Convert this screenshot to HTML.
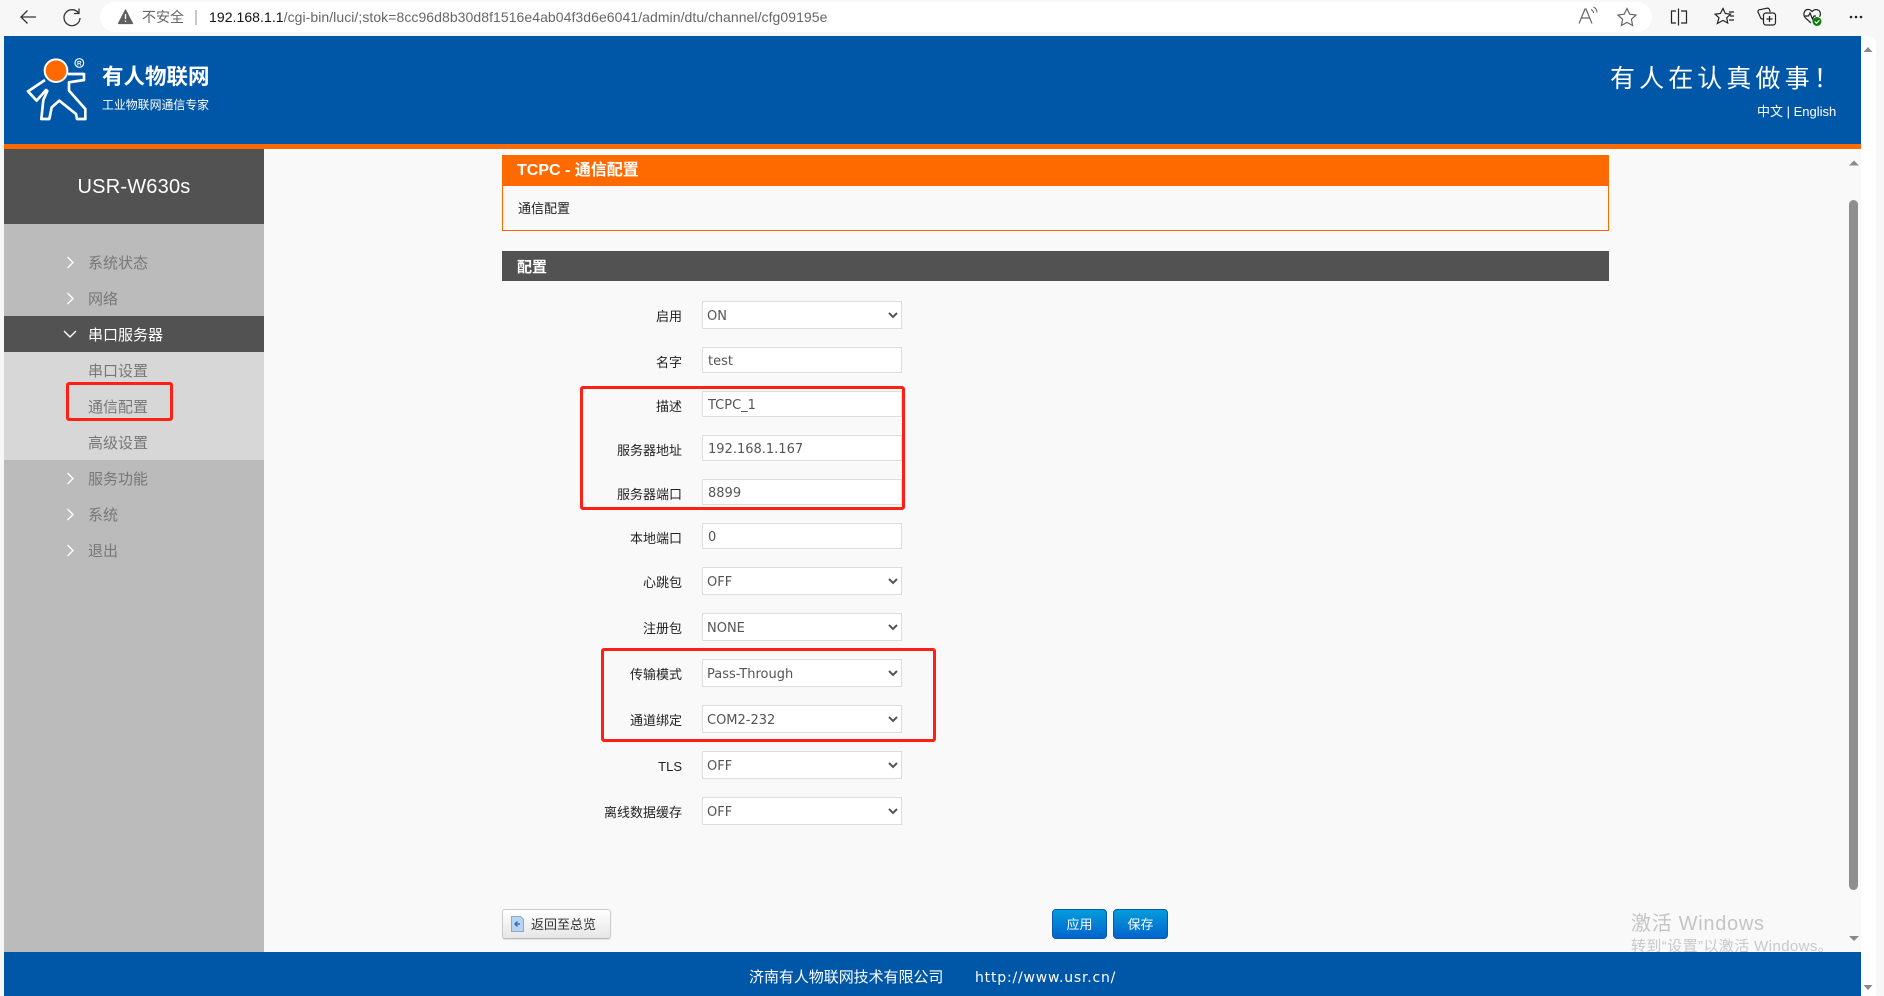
<!DOCTYPE html>
<html lang="zh"><head><meta charset="utf-8"><title>TCPC - 通信配置</title>
<style>
*{box-sizing:border-box}
html,body{margin:0;padding:0;width:1884px;height:996px;overflow:hidden;background:#f7f7f7;font-family:"Liberation Sans","Noto Sans CJK SC",sans-serif}
.a{position:absolute;white-space:nowrap}
.t{position:absolute;white-space:nowrap;line-height:20px;height:20px}
.side{font-size:15px;color:#777;left:88px}
.lab{font-size:13px;color:#222;right:1202px;text-align:right;margin-top:1px}
.f{position:absolute;left:702px;width:200px;background:#fff;border:1px solid #ddd;border-radius:0;font:13px "DejaVu Sans",sans-serif;color:#555;margin:0;outline:0}
select.f{height:28px;padding:2px 5px 0 0}
input.f{height:26px;padding:2px 5px 0 5px}
.btn{position:absolute;top:909px;height:30px;width:55px;border-radius:4px;background:linear-gradient(#049cdb,#0064cd);border:1px solid #0559b0;color:#fff;font-size:13px;text-align:center;line-height:30px}
.red{position:absolute;border:3px solid #ff2015;border-radius:3px}
svg{position:absolute;overflow:visible}
</style></head><body>

<!-- browser toolbar -->
<div class="a" style="left:100px;top:2px;width:1552px;height:30px;background:#fff;border-radius:15px"></div>
<svg style="left:0;top:0" width="240" height="36" fill="none" stroke="#333" stroke-width="1.3">
<path d="M36 17H21M27.5 10.5L21 17l6.5 6.5"/>
<path d="M78.5 13A8 8 0 1 0 80 18" /><path d="M79 8.5v5h-5"/>
<path d="M125.5 10l7 13.5h-14z" fill="#606060" stroke="#606060" stroke-linejoin="round"/>
<path d="M125.5 14v5M125.5 20.5v1.5" stroke="#fff" stroke-width="1.3"/>
<path d="M196 10v15" stroke="#aaa"/>
</svg>
<div class="t" style="left:142px;top:7px;font-size:14px;color:#666">不安全</div>
<div class="t" style="left:209px;top:7px;font-size:14px;color:#666;letter-spacing:.06px"><span style="color:#111">192.168.1.1</span>/cgi-bin/luci/;stok=8cc96d8b30d8f1516e4ab04f3d6e6041/admin/dtu/channel/cfg09195e</div>
<svg style="left:1570px;top:0" width="314" height="36" fill="none" stroke="#666" stroke-width="1.2">
<path d="M9 23.5L15 9h1l6 14.5M11.500 18h8"/><path d="M21 9.5c1.500.8 2.500 2 2.500 3.500M23.500 7c2 1 3.500 3 3.500 5.500" stroke-width="1"/>
<path d="M57 8.500l2.700 5.700 6.300.8-4.600 4.300 1.200 6.200-5.600-3.100-5.600 3.100 1.200-6.200L47.900 15l6.300-.8z"/>
<g stroke="#222">
<path d="M108.500 8.500v17M106 11h-4.500v12H106M111 11h5.500v12H111"/>
<path d="M153 8.500l2.300 5 5.200.7-3.800 3.600 1 5.200-4.700-2.600-5.700 3.100 1.700-5.700-3.900-3.600 5.300-.7zM159 12h5M160 16h4M159 20h5"/>
<path d="M194 19h-1.500c-1.200 0-2-1-2.200-2L188 12c-.3-1 .3-2 1.300-2.200l7.700-1.600c1-.2 2 .3 2.500 1.500l.7 2.300"/><rect x="193.500" y="13" width="12" height="12" rx="2.500"/><path d="M199.500 16v6M196.500 19h6"/>
</g>
<path d="M241 23l-5.500-5c-3-3-1.500-8 2-8.500 2-.3 3.500.7 4.500 2 1.500-1.500 3-2.300 5-1.800 3 .7 4.500 4 2.500 7M234.500 16h4l1.500-3 2.500 6 1.500-3h2" stroke="#222"/>
<circle cx="247" cy="21.500" r="4.500" fill="#107c10" stroke="none"/><path d="M244.800 21.500l1.700 1.700 2.900-3" stroke="#fff" stroke-width="1.100"/>
<g fill="#222" stroke="none"><circle cx="281" cy="17" r="1.300"/><circle cx="286" cy="17" r="1.300"/><circle cx="291" cy="17" r="1.300"/></g>
</svg>

<!-- window frame -->
<div class="a" style="left:4px;top:36px;width:1872px;height:960px;background:#f9f9f9;border-radius:6px 8px 0 0;overflow:hidden">
  <div class="a" style="left:1857px;top:0;width:15px;height:960px;background:#fff"></div>
</div>
<svg style="left:1860px;top:40px" width="16" height="956" fill="#8a8a8a"><path d="M3.500 12l4.500-5 4.500 5z"/><path d="M3.500 945l4.500 5 4.500-5z"/></svg>

<!-- header -->
<div class="a" style="left:4px;top:36px;width:1857px;height:108px;background:#0057a7"></div>
<div class="a" style="left:4px;top:144px;width:1857px;height:5px;background:#ff6a00"></div>
<svg style="left:20px;top:50px" width="80" height="80" viewBox="0 0 240 240">
<path d="M75 90L24 124l26 28 28-32 4 3-12 27-6 57h24l7-35 23-20 50 40 3 15h25v-30l-49-55v-25l45-7V72h-48" fill="none" stroke="#fff" stroke-width="8" stroke-linejoin="round"/>
<circle cx="108" cy="62" r="34" fill="#ff6a00" stroke="#fff" stroke-width="6"/>
<circle cx="178" cy="39" r="13" fill="none" stroke="#fff" stroke-width="3.500"/>
<text x="178" y="46" font-size="19" font-weight="700" fill="#fff" text-anchor="middle" font-family="Liberation Sans">R</text>
</svg>
<div class="t" style="left:102px;top:65px;height:24px;line-height:24px;font-size:21.500px;font-weight:700;color:#fff">有人物联网</div>
<div class="t" style="left:102px;top:95px;font-size:11.900px;color:#fff">工业物联网通信专家</div>
<div class="t" style="left:1610px;top:63px;height:32px;line-height:32px;font-size:25px;letter-spacing:4.100px;color:#fff">有人在认真做事！</div>
<div class="t" style="left:1757px;top:102px;font-size:13px;color:#fff">中文 | English</div>

<!-- sidebar -->
<div class="a" style="left:4px;top:149px;width:260px;height:803px;background:#bbb"></div>
<div class="a" style="left:4px;top:149px;width:260px;height:75px;background:#525252"></div>
<div class="t" style="left:4px;width:260px;top:177px;font-size:20px;color:#fff;text-align:center;letter-spacing:.2px">USR-W630s</div>
<div class="a" style="left:4px;top:316px;width:260px;height:36px;background:#525252"></div>
<div class="a" style="left:4px;top:352px;width:260px;height:108px;background:#d7d7d7"></div>
<div class="t side" style="top:254px">系统状态</div>
<div class="t side" style="top:290px">网络</div>
<div class="t side" style="top:326px;color:#fff">串口服务器</div>
<div class="t side" style="top:362px">串口设置</div>
<div class="t side" style="top:398px">通信配置</div>
<div class="t side" style="top:434px">高级设置</div>
<div class="t side" style="top:470px">服务功能</div>
<div class="t side" style="top:506px">系统</div>
<div class="t side" style="top:542px">退出</div>
<svg style="left:0;top:0" width="100" height="600" fill="none" stroke="#fff" stroke-width="1.400">
<path d="M67.500 257l5.500 5.500-5.500 5.500M67.500 293l5.500 5.500-5.500 5.500M64 331l6 6 6-6M67.500 473l5.500 5.500-5.500 5.500M67.500 509l5.500 5.500-5.500 5.500M67.500 545l5.500 5.500-5.500 5.500"/>
</svg>
<div class="red" style="left:66px;top:382px;width:107px;height:39px"></div>

<!-- content panels -->
<div class="a" style="left:502px;top:155px;width:1107px;height:76px;border:1px solid #ff6a00;border-top:0"></div>
<div class="a" style="left:502px;top:155px;width:1107px;height:31px;background:#ff6a00"></div>
<div class="t" style="left:517px;top:161px;font-size:16px;font-weight:700;color:#fff">TCPC - 通信配置</div>
<div class="t" style="left:518px;top:199px;font-size:13px;color:#222">通信配置</div>
<div class="a" style="left:502px;top:251px;width:1107px;height:30px;background:#525252"></div>
<div class="t" style="left:517px;top:258px;font-size:15px;font-weight:700;color:#fff">配置</div>

<!-- form -->
<div class="t lab" style="top:306px">启用</div>
<select class="f" style="top:301px"><option>ON</option></select>
<div class="t lab" style="top:352px">名字</div>
<input class="f" style="top:347px" value="test">
<div class="t lab" style="top:396px">描述</div>
<input class="f" style="top:391px" value="TCPC_1">
<div class="t lab" style="top:440px">服务器地址</div>
<input class="f" style="top:435px" value="192.168.1.167">
<div class="t lab" style="top:484px">服务器端口</div>
<input class="f" style="top:479px" value="8899">
<div class="t lab" style="top:528px">本地端口</div>
<input class="f" style="top:523px" value="0">
<div class="t lab" style="top:572px">心跳包</div>
<select class="f" style="top:567px"><option>OFF</option></select>
<div class="t lab" style="top:618px">注册包</div>
<select class="f" style="top:613px"><option>NONE</option></select>
<div class="t lab" style="top:664px">传输模式</div>
<select class="f" style="top:659px"><option>Pass-Through</option></select>
<div class="t lab" style="top:710px">通道绑定</div>
<select class="f" style="top:705px"><option>COM2-232</option></select>
<div class="t lab" style="top:756px">TLS</div>
<select class="f" style="top:751px"><option>OFF</option></select>
<div class="t lab" style="top:802px">离线数据缓存</div>
<select class="f" style="top:797px"><option>OFF</option></select>
<div class="red" style="left:580px;top:386px;width:325px;height:124px"></div>
<div class="red" style="left:601px;top:648px;width:335px;height:94px"></div>

<!-- buttons -->
<div class="a" style="left:502px;top:909px;width:109px;height:30px;border:1px solid #ccc;border-bottom-color:#bbb;border-radius:3px;background:linear-gradient(#fff,#e6e6e6);box-shadow:0 1px 1px rgba(0,0,0,.1)"></div>
<svg style="left:510px;top:915px" width="16" height="18"><path d="M1.500 1.500h9l3 3v12h-12z" fill="#b9d3f2" stroke="#8aa9cf"/><path d="M10 9H5M7.500 6.500L5 9l2.500 2.500" fill="none" stroke="#3a6fb5" stroke-width="1.500"/></svg>
<div class="t" style="left:531px;top:915px;font-size:13px;color:#333">返回至总览</div>
<div class="btn" style="left:1052px">应用</div>
<div class="btn" style="left:1113px">保存</div>

<!-- inner scrollbar -->
<svg style="left:1847px;top:155px" width="14" height="795" fill="#8a8a8a"><path d="M2 10.500l5-5 5 5z"/><path d="M2 781l5 5 5-5z"/></svg>
<div class="a" style="left:1849px;top:200px;width:9px;height:690px;background:#8f8f8f;border-radius:5px"></div>

<!-- watermark -->
<div class="t" style="left:1631px;top:909px;height:30px;line-height:30px;font-size:20px;color:#c4c4c4;letter-spacing:.7px">激活 Windows</div>
<div class="t" style="left:1631px;top:937px;font-size:15px;color:#c9c9c9;letter-spacing:.4px">转到“设置”以激活 Windows。</div>

<!-- footer -->
<div class="a" style="left:4px;top:952px;width:1857px;height:44px;background:#0057a7"></div>
<div class="t" style="left:749px;top:968px;font-size:15px;color:#fff;letter-spacing:-.05px">济南有人物联网技术有限公司</div>
<div class="t" style="left:975px;top:968px;font:14px/20px 'DejaVu Sans',sans-serif;color:#fff;letter-spacing:.8px">http://www.usr.cn/</div>
</body></html>
